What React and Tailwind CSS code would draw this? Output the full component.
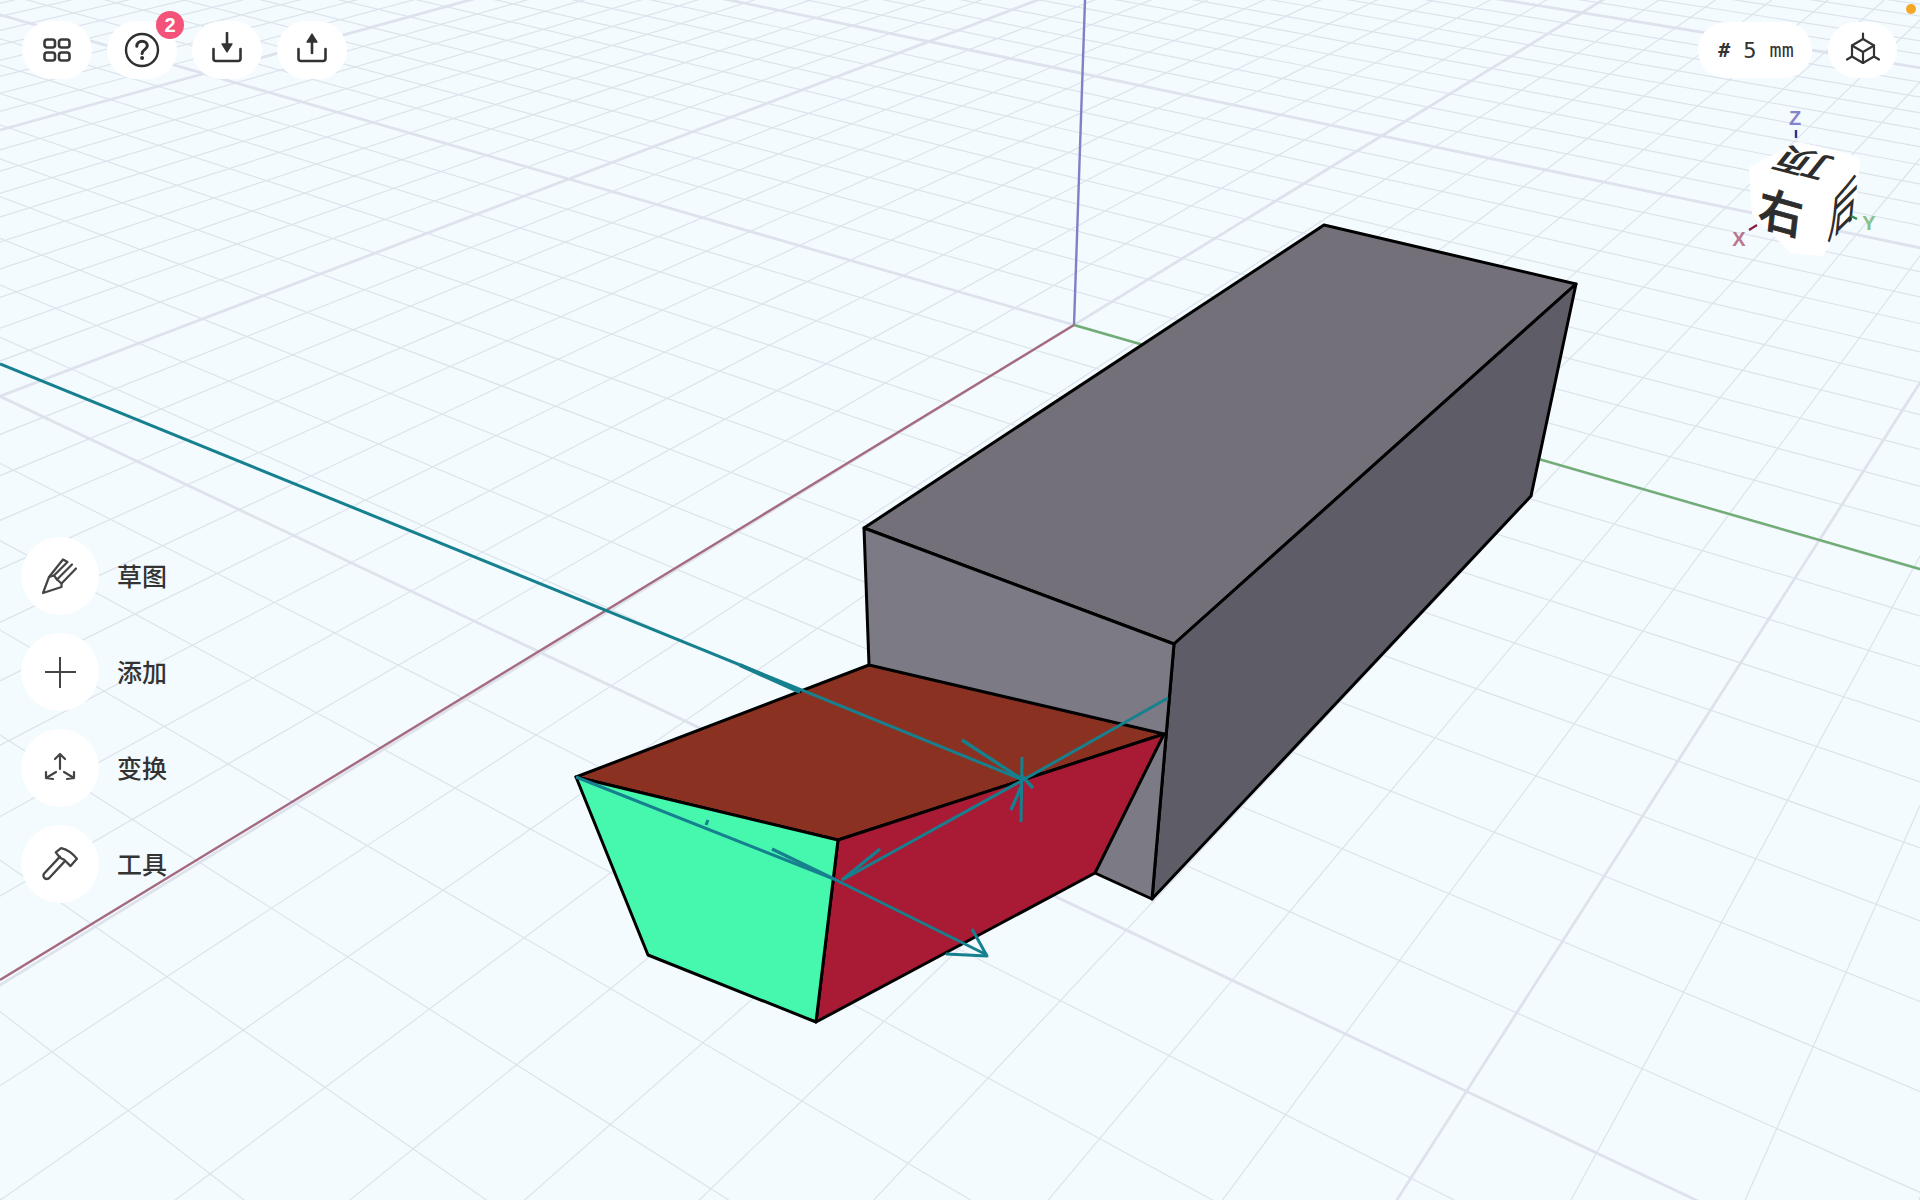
import React from 'react';

// ground plane perspective, read off the reference
const VA = [-2062, -581];
const VB = [2530, -570];
const O = [1074, 325];
const CELL_S = 0.0268;
const CELL_T = 0.0192;

const range = (from, to) => Array.from({ length: to - from + 1 }, (_, i) => from + i);

const lineFrom = (vp, other, amount) => {
    const dx = O[0] - vp[0] + amount * (other[0] - vp[0]);
    const dy = O[1] - vp[1] + amount * (other[1] - vp[1]);
    const k = (1300 - vp[1]) / dy;
    return [vp[0], vp[1], vp[0] + dx * k, vp[1] + dy * k];
};

const GridLines = () => {
    const lines = [
        ...range(-18, 30).map((i) => ({ key: `a${i}`, major: i % 10 === 0, c: lineFrom(VA, VB, i * CELL_S) })),
        ...range(-15, 32).map((i) => ({ key: `b${i}`, major: i % 10 === 0, c: lineFrom(VB, VA, i * CELL_T) })),
    ];
    return (
        <g className="blur-[0.5px]">
            {lines.filter((l) => !l.major).map((l) => (
                <line key={l.key} x1={l.c[0]} y1={l.c[1]} x2={l.c[2]} y2={l.c[3]} stroke="#dce3ec" strokeWidth="1.2" />
            ))}
            {lines.filter((l) => l.major).map((l) => (
                <line key={l.key} x1={l.c[0]} y1={l.c[1]} x2={l.c[2]} y2={l.c[3]} stroke="#dde2ed" strokeWidth="2.8" />
            ))}
        </g>
    );
};

const Teal = ({ points, width = 3 }) => (
    <polyline points={points} fill="none" stroke="#16808f" strokeWidth={width} strokeLinejoin="round" />
);

const Scene = () => (
    <svg className="absolute inset-0" width="1920" height="1200" viewBox="0 0 1920 1200">
        <GridLines />

        <line x1="1074" y1="325" x2="1085" y2="0" stroke="#8280c4" strokeWidth="2.4" />
        <line x1="1074" y1="325" x2="1920" y2="569" stroke="#70ad74" strokeWidth="2.4" />
        <line x1="1074" y1="325" x2="0" y2="980" stroke="#a66a80" strokeWidth="2.4" />

        <g stroke="#000" strokeWidth="3" strokeLinejoin="round">
            <polygon points="1324,225 1576,284 1174,644 864,528" fill="#73707a" />
            <polygon points="1576,284 1531,496 1152,899 1174,644" fill="#5e5c66" />
            <polygon points="864,528 1174,644 1152,899 1095,873 869,665" fill="#7c7a84" />
            <polygon points="869,665 1164,734 838,840 576,777" fill="#8b3122" />
            <polygon points="1164,734 1095,873 816,1022 838,840" fill="#a91a35" />
            <polygon points="576,777 838,840 816,1022 648,955" fill="#46f7ae" />
        </g>

        <Teal points="0,364 1023,780" />
        <Teal points="1168,698 1023,780 842,880" />
        <Teal points="576,777 834,879 987,955" />
        <Teal points="740,665 800,692" width={4} />
        <Teal points="962,740 1023,780" width={3.4} />
        <Teal points="1022,757 1021,822" width={3} />
        <Teal points="1011,810 1021,787" width={3.4} />
        <Teal points="1021,775 1033,788" width={3.4} />
        <Teal points="880,849 842,880" width={3.4} />
        <Teal points="772,849 834,879" width={3.4} />
        <Teal points="706,825 708,820" />
        <Teal points="972,929 987,956 946,954" />
    </svg>
);

const CubeGizmo = () => (
    <svg className="absolute top-0 right-0" width="240" height="270" viewBox="1680 0 240 270">
        <polygon
            points="1754,170 1800,147 1855,161 1851,203 1820,251 1793,248 1757,213"
            fill="#fff"
            stroke="#fff"
            strokeWidth="10"
            strokeLinejoin="round"
        />
        <g fontFamily='"Noto Sans CJK SC", sans-serif' fontWeight="500" fontSize="44" fill="#2d2d2d" textAnchor="middle">
            <text stroke="#2d2d2d" strokeWidth="0.8" transform="matrix(1 0.28 -0.12 1.05 1779 230)">右</text>
            <text transform="matrix(0.64 -0.64 -0.12 1.18 1841 227)">后</text>
            <text transform="matrix(-1.15 -0.3 0.5 -0.62 1812 153)">顶</text>
        </g>
        <g fontFamily='"Liberation Sans", sans-serif' fontSize="20" fontWeight="700" textAnchor="middle">
            <text x="1795" y="125" fill="#8583c9">Z</text>
            <text x="1739" y="246" fill="#b7778f">X</text>
            <text x="1869" y="230" fill="#86c08b">Y</text>
        </g>
        <line x1="1796" y1="130" x2="1796" y2="138" stroke="#33337f" strokeWidth="2.4" />
        <line x1="1749" y1="230" x2="1757" y2="225" stroke="#8b2040" strokeWidth="2.4" />
        <line x1="1851" y1="216" x2="1857" y2="219" stroke="#2e8b57" strokeWidth="2.4" />
    </svg>
);

const GridIcon = () => (
    <svg width="30" height="26" viewBox="0 0 30 26" fill="none" stroke="#3a3a3a" strokeWidth="2.6">
        <rect x="2.5" y="2.5" width="10.5" height="8" rx="2.5" />
        <rect x="17" y="2.5" width="10.5" height="8" rx="2.5" />
        <rect x="2.5" y="15.5" width="10.5" height="8" rx="2.5" />
        <rect x="17" y="15.5" width="10.5" height="8" rx="2.5" />
    </svg>
);

const HelpIcon = () => (
    <svg width="36" height="36" viewBox="0 0 36 36" fill="none" stroke="#2f2f2f">
        <circle cx="18" cy="18" r="16" strokeWidth="2.4" />
        <path d="M12.8 14.2c0-3 2.3-5 5.3-5s5.2 2 5.2 4.600c0 3.800-5.200 3.800-5.200 7.600" strokeWidth="3" strokeLinecap="round" />
        <circle cx="18.100" cy="26" r="2" fill="#2f2f2f" stroke="none" />
    </svg>
);

const TrayIcon = ({ up }) => (
    <svg width="32" height="36" viewBox="0 0 32 36" fill="none" stroke="#333" strokeWidth="2.6" strokeLinecap="round">
        <path d="M2.500 17v9.500a2.500 2.500 0 0 0 2.500 2.500h22a2.500 2.500 0 0 0 2.500-2.500V17" />
        {up ? (
            <>
                <path d="M16 8v13" />
                <path d="M16 2l5 8h-10z" fill="#333" strokeWidth="1.400" strokeLinejoin="round" />
            </>
        ) : (
            <>
                <path d="M16 1v13" />
                <path d="M16 20l-5-8h10z" fill="#333" strokeWidth="1.400" strokeLinejoin="round" />
            </>
        )}
    </svg>
);

const AxisCubeIcon = () => (
    <svg width="36" height="36" viewBox="0 0 36 36" fill="none" stroke="#333" strokeWidth="2.2" strokeLinejoin="round" strokeLinecap="round">
        <path d="M18 7l11 6.500v11L18 31 7 24.500v-11z" />
        <path d="M7 13.500L18 20l11-6.500M18 20v11" />
        <path d="M18 1.500V7M7 24.500L2 27.500M29 24.500l5 3" />
    </svg>
);

const SketchIcon = () => (
    <svg width="40" height="40" viewBox="0 0 40 40" fill="none" stroke="#444" strokeWidth="2.200" strokeLinejoin="round" strokeLinecap="round">
        <path d="M3 37l6-16 5-1.500 3 4 4.500 4 0 3.500z" />
        <path d="M9 21L23 3.500l4.500 2.500M14 19.500L27.500 6 M17 23.500L32 8.500M21.500 27.500L36 12.500" />
    </svg>
);

const TransformIcon = () => (
    <svg width="36" height="36" viewBox="0 0 36 36" fill="none" stroke="#444" strokeWidth="2.200" strokeLinecap="round" strokeLinejoin="round">
        <path d="M18 19V4M13 9l5-5 5 5" />
        <path d="M14 22L4 28M4 22l0 6 7 1" />
        <path d="M22 22l10 6M32 22l0 6-7 1" />
    </svg>
);

const HammerIcon = () => (
    <svg width="38" height="38" viewBox="0 0 36 36" fill="none" stroke="#444" strokeWidth="2.200" strokeLinecap="round" strokeLinejoin="round">
        <path d="M18 11L3 27a2.800 2.800 0 0 0 5 4L22 16" />
        <path d="M14 7l5-4c5 1 10 4 15 10l-6 7-6-6-4-2z" />
    </svg>
);

const RoundButton = ({ children }) => (
    <div className="w-[70px] h-[58px] rounded-[29px] bg-white flex items-center justify-center">
        {children}
    </div>
);

const TopBar = () => (
    <div className="absolute top-[21px] left-[22px] flex gap-[15px]">
        <RoundButton><GridIcon /></RoundButton>
        <div className="relative">
            <RoundButton><HelpIcon /></RoundButton>
            <span className="absolute -top-[10px] right-[-7px] w-[28px] h-[28px] rounded-full bg-[#f5527a] text-white text-[20px] font-bold flex items-center justify-center font-['Liberation_Sans',sans-serif]">
                2
            </span>
        </div>
        <RoundButton><TrayIcon /></RoundButton>
        <RoundButton><TrayIcon up /></RoundButton>
    </div>
);

const UnitBar = () => (
    <div className="absolute top-[22px] right-[23px] flex items-center gap-[16px]">
        <div className="w-[114px] h-[56px] rounded-[28px] bg-white flex items-center justify-center gap-[13px] pl-[2px] text-[#333] text-[22px] font-['DejaVu_Sans_Mono',monospace]">
            <span className="font-bold text-[20px]">#</span>
            <span>5</span>
            <span className="text-[20px]">mm</span>
        </div>
        <div className="w-[69px] h-[56px] rounded-[28px] bg-white flex items-center justify-center">
            <AxisCubeIcon />
        </div>
    </div>
);

const tools = [
    { label: '草图', icon: <SketchIcon /> },
    { label: '添加', icon: <span className="block relative w-[31px] h-[31px] before:absolute before:left-[14.500px] before:top-0 before:w-[2px] before:h-full before:bg-[#444] after:absolute after:top-[14.500px] after:left-0 after:h-[2px] after:w-full after:bg-[#444]" /> },
    { label: '变换', icon: <TransformIcon /> },
    { label: '工具', icon: <HammerIcon /> },
];

const ToolBar = () => (
    <div className="absolute top-[537px] left-[21px] flex flex-col gap-[18px]">
        {tools.map((tool) => (
            <div key={tool.label} className="flex items-center gap-[18px]">
                <div className="w-[78px] h-[78px] rounded-full bg-white flex items-center justify-center">
                    {tool.icon}
                </div>
                <span className="-mt-[2px] text-[25px] leading-none font-medium text-[#333] font-['Noto_Sans_CJK_SC',sans-serif]">
                    {tool.label}
                </span>
            </div>
        ))}
    </div>
);

export default function App() {
    return (
        <div className="relative w-[1920px] h-[1200px] overflow-hidden bg-[#f3fbff]">
            <Scene />
            <CubeGizmo />
            <TopBar />
            <UnitBar />
            <ToolBar />
            <div className="absolute top-[4px] right-[4px] w-[10px] h-[10px] rounded-full bg-[#f5a623]" />
        </div>
    );
}
